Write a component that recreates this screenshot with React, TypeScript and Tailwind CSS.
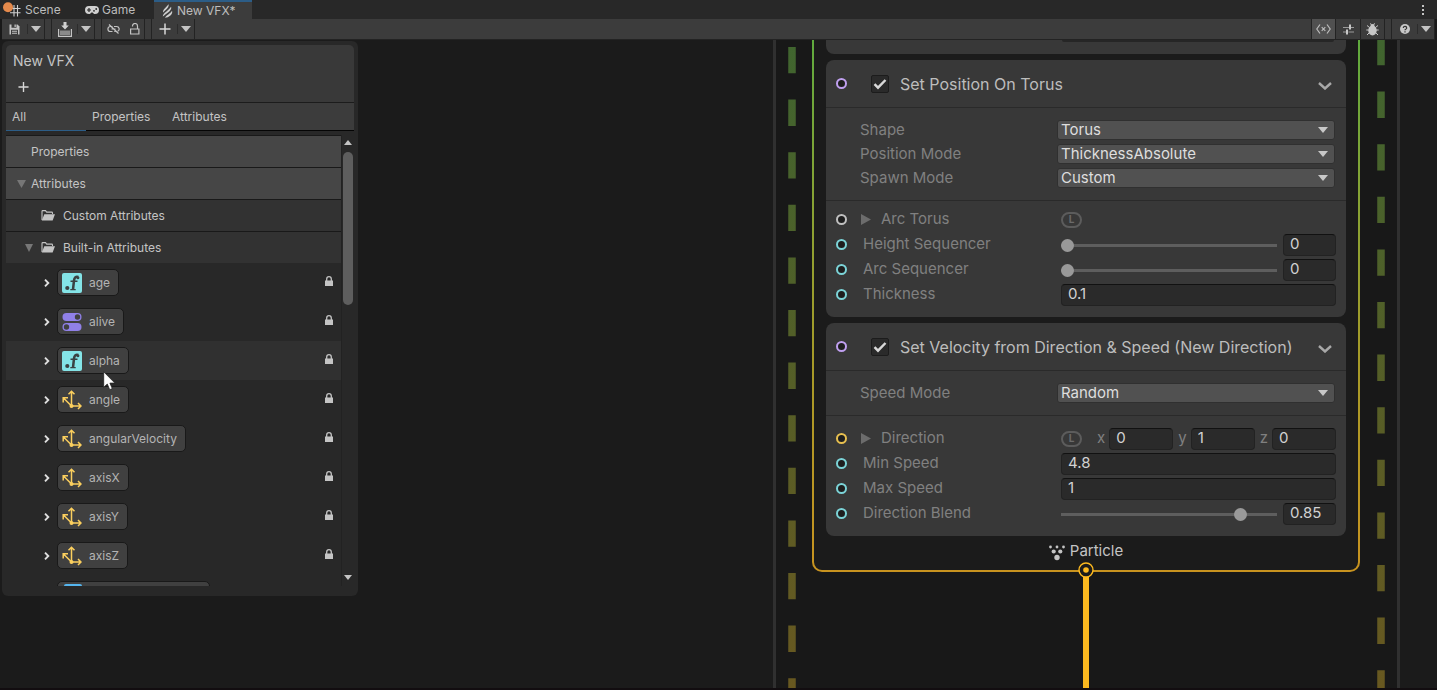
import React from "react";

const caret = "h-[6px] w-[10px] fill-[#c4c4c4]";

function Caret({ className = caret }: { className?: string }) {
  return (
    <svg viewBox="0 0 10 6" className={className} preserveAspectRatio="none" aria-hidden="true">
      <path d="M0 0h10L5 6z" />
    </svg>
  );
}

function Scene() {
  return (
    <svg viewBox="0 0 20 16" className="h-4 w-5" aria-hidden="true">
      <path d="M12 3v11.500M15.500 3v11.500M8 6.500h10.500M8 10.700h10.500" stroke="#cfcfcf" strokeWidth="1.100" />
      <circle cx="6" cy="5.200" r="5" fill="#e58a4c" />
    </svg>
  );
}

function Gamepad() {
  return (
    <svg viewBox="0 0 14 8" className="h-2 w-[14px]" aria-hidden="true">
      <path d="M4 0h6a4 4 0 0 1 0 8c-1.200 0-1.800-.8-2.400-1.600H6.400C5.800 7.200 5.200 8 4 8a4 4 0 0 1 0-8z" fill="#d0d0d0" />
      <path d="M2 4h4M4 2v4" stroke="#282828" strokeWidth="1.200" />
      <circle cx="9" cy="4.800" r=".9" fill="#282828" />
      <circle cx="11.200" cy="3" r=".9" fill="#282828" />
    </svg>
  );
}

function Vfx() {
  return (
    <svg viewBox="0 0 11 14" className="h-[14px] w-[11px]" aria-hidden="true">
      <path d="M1 8.500C.8 5 4.500 3.500 6.500.3 7.500 3 4.500 5.500 1 8.500zM.8 12.500C.8 9 7 6.500 9 2.800 10.500 6 5 9 .8 12.500zM3 13.800C4 11.500 8.500 9.500 10 6.800 11.200 10 7.500 13.500 3 13.800z" fill="#cfcfcf" />
    </svg>
  );
}

function Save() {
  return (
    <svg viewBox="0 0 11 11" className="h-[11px] w-[11px]" aria-hidden="true">
      <path d="M.5.5H8.500l2 2v8H.5z" fill="#c4c4c4" />
      <path d="M2.500 0h5v3.800h-5zM2 5.800h7V11H2z" fill="#3c3c3c" />
      <path d="M5.500.5h1.300v2.600H5.500zM3 6.800h5v1H3zM3 8.800h5v1H3z" fill="#c4c4c4" />
    </svg>
  );
}

function Import() {
  return (
    <svg viewBox="0 0 14 15" className="h-[15px] w-[14px]" aria-hidden="true">
      <path d="M2 8.500h10V13H2z" fill="#8a8a8a" />
      <path d="M.6 7v7.300h12.800V7" fill="none" stroke="#c4c4c4" strokeWidth="1.200" />
      <path d="M5.500 0h3v3.500h2.300L7 7.500 3.200 3.500h2.300z" fill="#d0d0d0" />
    </svg>
  );
}

function Unlink() {
  return (
    <svg viewBox="0 0 13 10" className="h-[10px] w-[13px]" fill="none" stroke="#c4c4c4" strokeWidth="1.200" aria-hidden="true">
      <path d="M5.500 2.500H3.400a2.500 2.500 0 0 0 0 5H5.500M7 2.500h2.600a2.500 2.500 0 0 1 1 4.800M7.300 7.500h1.200M4.500 5h4M2 .5l9.500 9" />
    </svg>
  );
}

function Unlocked() {
  return (
    <svg viewBox="0 0 10 12" className="h-3 w-[10px]" fill="none" stroke="#c4c4c4" strokeWidth="1.200" aria-hidden="true">
      <path d="M.6 6h8.300v5H.6zM2.500 3.500V3a2.500 2.500 0 0 1 5 0v3" />
    </svg>
  );
}

function Plus() {
  return (
    <svg viewBox="0 0 12 12" className="h-3 w-3" stroke="#d8d8d8" strokeWidth="1.500" aria-hidden="true">
      <path d="M6 .5v11M.5 6h11" />
    </svg>
  );
}

function Code() {
  return (
    <svg viewBox="0 0 15 10" className="h-[10px] w-[15px] shrink-0" fill="none" stroke="#bcbcbc" strokeWidth="1.200" aria-hidden="true">
      <path d="M4 .5.800 5 4 9.500M11 .5 14.200 5 11 9.500M5.700 3.200l3.600 3.600M9.300 3.200 5.700 6.800" />
    </svg>
  );
}

function Sliders() {
  return (
    <svg viewBox="0 0 11 11" className="h-[11px] w-[11px]" aria-hidden="true">
      <path d="M0 3.500h6M8 3.500h3M0 8h3M5.500 8H11" stroke="#9a9a9a" strokeWidth="1.200" />
      <path d="M7 .5v5M4 5.500v5" stroke="#d8d8d8" strokeWidth="1.800" />
    </svg>
  );
}

function Bug() {
  return (
    <svg viewBox="0 0 13 13" className="h-[13px] w-[13px]" aria-hidden="true">
      <path d="M1 2.500 3.500 4.500M12 2.500 9.500 4.500M.3 7h12.400M1 12l2.500-2.500M12 12 9.500 9.500M4.500.3l1 2M8.500.3l-1 2" stroke="#c8c8c8" />
      <ellipse cx="6.500" cy="7.500" rx="4.200" ry="5" fill="#c8c8c8" />
      <circle cx="6.500" cy="3" r="2" fill="#c8c8c8" />
    </svg>
  );
}

function Help() {
  return (
    <svg viewBox="0 0 10 10" className="h-[10px] w-[10px]" aria-hidden="true">
      <circle cx="5" cy="5" r="5" fill="#c8c8c8" />
      <path d="M3.300 4a1.700 1.500 0 1 1 2.400 1.300C5.200 5.500 5 5.800 5 6.300M5 7.200v1.200" stroke="#333" strokeWidth="1.200" fill="none" />
    </svg>
  );
}

function Folder() {
  return (
    <svg viewBox="0 0 14 11" className="h-[11px] w-[14px]" aria-hidden="true">
      <path d="M1 10V1.500Q1 .6 1.800.6h2.700l1.200 1.500h5q.8 0 .8.8V4" fill="none" stroke="#c4c4c4" strokeWidth="1.100" />
      <path d="M3.300 4.200H14L11.600 10.600H.8z" fill="#c4c4c4" />
    </svg>
  );
}

function FloatIcon() {
  return (
    <svg viewBox="0 0 20 20" className="h-5 w-5 shrink-0" aria-hidden="true">
      <rect width="20" height="20" rx="2" fill="#84e4e7" />
      <circle cx="5.300" cy="15" r="2.100" fill="#3a4243" />
      <path d="M11 16.500 12 7.500C12.300 4.300 14 3.200 16.300 4" fill="none" stroke="#3a4243" strokeWidth="2.500" />
      <path d="M8.500 8.200h7M8.300 16.600h5.400" stroke="#3a4243" strokeWidth="1.400" />
      <circle cx="15.900" cy="4.700" r="1.500" fill="#3a4243" />
    </svg>
  );
}

function BoolIcon() {
  return (
    <svg viewBox="0 0 20 20" className="h-5 w-5 shrink-0" aria-hidden="true">
      <rect x=".5" y="1" width="19" height="8" rx="4" fill="#9080e8" />
      <rect x=".5" y="11" width="19" height="8" rx="4" fill="#9080e8" />
      <circle cx="15.500" cy="5" r="2.700" fill="#404040" />
      <circle cx="4.500" cy="15" r="2.700" fill="#404040" />
    </svg>
  );
}

function VectorIcon() {
  return (
    <svg viewBox="0 0 20 20" className="h-5 w-5 shrink-0" fill="none" stroke="#fbcf5e" strokeWidth="1.500" aria-hidden="true">
      <path d="M9.500 16V2M6.500 4.300 9.500 1.300l3 3M9.500 16H19M16 13l3 3-3 3M9.500 16 1.500 8M1.200 12.500V7.700H6" />
      <circle cx="9.500" cy="16" r="2" fill="#fbcf5e" stroke="none" />
    </svg>
  );
}

function Lock() {
  return (
    <svg viewBox="0 0 8 10" className="h-[10px] w-2" aria-hidden="true">
      <path d="M0 4.500h8V10H0z" fill="#c4c4c4" />
      <path d="M1.700 5V3a2.300 2.300 0 0 1 4.600 0v2" fill="none" stroke="#c4c4c4" strokeWidth="1.300" />
    </svg>
  );
}

function Tool({ label, children, className }: { label: string; children: React.ReactNode; className: string }) {
  return (
    <button aria-label={label} className={"flex items-center justify-center " + className}>
      {children}
    </button>
  );
}

function SplitTool({ label, children }: { label: string; children: React.ReactNode }) {
  return (
    <div className="flex items-center border-r border-[#232323]">
      <Tool label={label} className="h-5 w-[25px]">{children}</Tool>
      <span className="h-[10px] w-px bg-[#2c2c2c]" />
      <Tool label={label + " options"} className="h-5 w-4 pb-px"><Caret /></Tool>
    </div>
  );
}

function TopBar() {
  return (
    <header>
      <nav className="flex h-[19px] items-stretch bg-[#282828] text-[12px] text-[#bdbdbd]">
        <button className="flex w-[76px] items-center gap-[3px] pl-[2px]"><Scene />Scene</button>
        <button className="flex w-[78px] items-center gap-[3px] pl-[9px]"><Gamepad />Game</button>
        <button className="flex w-[98px] items-center gap-1 border-t-2 border-[#2c5d87] bg-[#3c3c3c] pl-2"><Vfx />New VFX*</button>
        <button aria-label="Window menu" className="mr-2 ml-auto flex w-3 flex-col items-center justify-center gap-[2px]">
          <span className="h-[2px] w-[2px] bg-[#c4c4c4]" />
          <span className="h-[2px] w-[2px] bg-[#c4c4c4]" />
          <span className="h-[2px] w-[2px] bg-[#c4c4c4]" />
        </button>
      </nav>
      <div className="mx-[2px] flex h-[21px] items-stretch border-b border-[#232323] bg-[#3c3c3c]">
        <SplitTool label="Save"><Save /></SplitTool>
        <div className="ml-[6px] flex border-l border-[#232323]"><SplitTool label="Compile"><Import /></SplitTool></div>
        <div className="ml-[6px] flex border-x border-[#232323]">
          <Tool label="Auto attach" className="w-[23px]"><Unlink /></Tool>
          <Tool label="Lock" className="w-[19px]"><Unlocked /></Tool>
        </div>
        <div className="ml-[6px] flex border-l border-[#232323]"><SplitTool label="Add"><Plus /></SplitTool></div>
        <div className="ml-auto flex">
          <Tool label="Blackboard" className="w-6 border-l border-[#232323] bg-[#505050]"><Code /></Tool>
          <Tool label="Control" className="w-[25px] border-l border-[#232323]"><Sliders /></Tool>
          <Tool label="Debug" className="w-[25px] border-x border-[#232323]"><Bug /></Tool>
        </div>
        <div className="ml-[6px] flex border-l border-[#232323]"><SplitTool label="Help"><Help /></SplitTool></div>
      </div>
    </header>
  );
}

type Kind = "float" | "bool" | "vector";
const attributes: { name: string; kind: Kind }[] = [
  { name: "age", kind: "float" },
  { name: "alive", kind: "bool" },
  { name: "alpha", kind: "float" },
  { name: "angle", kind: "vector" },
  { name: "angularVelocity", kind: "vector" },
  { name: "axisX", kind: "vector" },
  { name: "axisY", kind: "vector" },
  { name: "axisZ", kind: "vector" },
];

function AttributeRow({ name, kind, hovered }: { name: string; kind: Kind; hovered: boolean }) {
  return (
    <li className={"flex h-[39px] items-center pr-2 pl-[35px] " + (hovered ? "bg-[#303030]" : "")}>
      <button aria-label={"Expand " + name} className="flex h-4 w-4 items-center">
        <svg viewBox="0 0 6 8" className="ml-[3px] h-2 w-[6px]" fill="none" stroke="#e0e0e0" strokeWidth="1.900" aria-hidden="true">
          <path d="M1 .7 4.300 4 1 7.300" />
        </svg>
      </button>
      <button className="flex h-[27px] items-center gap-[7px] rounded-[5px] border border-[#191919] bg-[#404040] pr-2 pl-1 text-[#b4b4b4]">
        {kind === "float" ? <FloatIcon /> : kind === "bool" ? <BoolIcon /> : <VectorIcon />}
        {name}
      </button>
      <span className="ml-auto pb-[3px]"><Lock /></span>
    </li>
  );
}

function Blackboard() {
  return (
    <aside className="absolute top-px left-[2px] flex h-[555px] w-[356px] flex-col rounded-md bg-[#282828] px-1 pt-1 pb-[10px] text-[12px] text-[#c4c4c4]">
      <div className="h-[57px] rounded-t-[5px] bg-[#393939] px-[7px] pt-[6px]">
        <h1 className="text-[14px] leading-5">New VFX</h1>
        <button aria-label="Add property" className="mt-[10px] ml-[5px] flex h-[11px] w-[11px]"><Plus /></button>
      </div>
      <div role="tablist" className="flex h-[29px] border-t border-b border-t-[#1c1c1c] border-b-[#050505] bg-[#3c3c3c]">
        <button role="tab" className="-mb-px w-20 border-b border-[#2c5d87] pl-[6px] text-left">All</button>
        <button role="tab" className="w-20 pl-[6px] text-left">Properties</button>
        <button role="tab" className="w-20 pl-[6px] text-left">Attributes</button>
      </div>
      <div className="mt-1 flex min-h-0 flex-1">
        <div className="min-w-0 flex-1 overflow-hidden border-t border-[#191919]">
          <div className="flex h-8 items-center border-b border-[#191919] bg-[#464646] pl-[25px]">Properties</div>
          <button className="flex h-8 w-full items-center gap-[5px] border-b border-[#191919] bg-[#464646] pl-[11px]">
            <Caret className="h-2 w-[9px] fill-[#777]" />Attributes
          </button>
          <div className="flex h-8 items-center gap-2 border-b border-[#191919] bg-[#323232] pl-[35px]"><Folder />Custom Attributes</div>
          <button className="flex h-[31px] w-full items-center gap-2 bg-[#323232] pl-[19px]">
            <Caret className="h-2 w-2 fill-[#777]" /><Folder />Built-in Attributes
          </button>
          <ul>
            {attributes.map((a) => <AttributeRow key={a.name} name={a.name} kind={a.kind} hovered={a.name === "alpha"} />)}
            <li className="pt-[6px] pl-[51px]">
              <div className="h-[27px] w-[153px] rounded-[5px] border border-[#191919] bg-[#404040] pt-[2px] pl-[6px]">
                <div className="h-5 w-[18px] rounded-[2px] bg-[#55b5ee]" />
              </div>
            </li>
          </ul>
        </div>
        <div className="flex w-[13px] flex-col items-center border-l border-[#222] pt-[5px] pb-[6px]">
          <Caret className="h-[5px] w-2 rotate-180 fill-[#c4c4c4]" />
          <div className="mt-[7px] h-[153px] w-[10px] rounded-full bg-[#5e5e5e]" />
          <Caret className="mt-auto h-[5px] w-2 fill-[#c4c4c4]" />
        </div>
      </div>
    </aside>
  );
}

function Port({ className }: { className: string }) {
  return <span className={"h-[11px] w-[11px] shrink-0 rounded-full border-2 bg-[#1e1e1e] " + className} />;
}

function Block({ title, id, children }: { title: string; id: string; children: React.ReactNode }) {
  return (
    <section className="rounded-lg bg-[#383838] pb-[10px]">
      <div className="flex h-12 items-center border-b border-[#2a2a2a] pr-[14px] pl-[10px]">
        <Port className="border-[#c0a0f0]" />
        <span className="relative ml-6 flex h-[18px] w-[18px]">
          <input id={id} type="checkbox" defaultChecked className="peer h-[18px] w-[18px] appearance-none rounded-[2px] border border-[#1c1c1c] bg-[#2a2a2a]" />
          <svg viewBox="0 0 18 18" className="pointer-events-none absolute inset-0 hidden peer-checked:block" fill="none" stroke="#d8d8d8" strokeWidth="2.400" aria-hidden="true">
            <path d="M3.500 9.200 7 12.700 14.500 5" />
          </svg>
        </span>
        <label htmlFor={id} className="ml-[11px] text-[16px] text-[#bdbdbd]">{title}</label>
        <button aria-label={"Collapse " + title} className="mt-1 ml-auto">
          <svg viewBox="0 0 14 8" className="h-2 w-[14px]" fill="none" stroke="#a8a8a8" strokeWidth="2.400" aria-hidden="true">
            <path d="M1 1l6 5.500L13 1" />
          </svg>
        </button>
      </div>
      {children}
    </section>
  );
}

function Setting({ label, value }: { label: string; value: string }) {
  return (
    <label className="flex h-6 items-center pr-[11px] pl-[34px]">
      <span className="w-[197px]">{label}</span>
      <span className="relative flex flex-1">
        <select defaultValue={value} className="h-5 w-full appearance-none rounded-[3px] border border-[#303030] bg-[#515151] pl-[3px] text-[15px] leading-4 text-[#dedede]">
          <option>{value}</option>
        </select>
        <Caret className="pointer-events-none absolute top-[7px] right-[7px] h-[6px] w-[10px] fill-[#c8c8c8]" />
      </span>
    </label>
  );
}

const field = "h-[22px] min-w-0 rounded-[4px] border border-[#222] border-t-[#111] bg-[#2a2a2a] px-[6px] text-[15px] text-[#d2d2d2]";

function InputRow({ label, port, nested, children }: { label: string; port: string; nested?: boolean; children: React.ReactNode }) {
  return (
    <div className="flex h-[25px] items-center pr-[10px] pl-[10px]">
      <Port className={port} />
      <span className="ml-4 flex w-[198px] items-center">
        {nested && (
          <svg viewBox="0 0 10 11" className="-ml-[2px] mr-[10px] h-[11px] w-[10px] fill-[#6c6c6c]" aria-hidden="true"><path d="M0 0l10 5.500L0 11z" /></svg>
        )}
        {label}
      </span>
      <div className="flex min-w-0 flex-1 items-center">{children}</div>
    </div>
  );
}

function Space() {
  return <button aria-label="Local space" className="flex h-4 w-[21px] items-center justify-center rounded-full border-2 border-[#5c5c5c] text-[10px] font-bold text-[#6a6a6a]">L</button>;
}

function SliderField({ label, value }: { label: string; value: string }) {
  return (
    <>
      <input
        type="range" min="0" max="1" step="0.01" defaultValue={value} aria-label={label}
        className="mt-[2px] mr-[6px] h-[14px] min-w-0 flex-1 appearance-none bg-transparent [&::-webkit-slider-runnable-track]:h-[3px] [&::-webkit-slider-runnable-track]:bg-[#5e5e5e] [&::-webkit-slider-thumb]:-mt-[5px] [&::-webkit-slider-thumb]:h-[13px] [&::-webkit-slider-thumb]:w-[13px] [&::-webkit-slider-thumb]:appearance-none [&::-webkit-slider-thumb]:rounded-full [&::-webkit-slider-thumb]:bg-[#999]"
      />
      <input aria-label={label + " value"} defaultValue={value} className={field + " w-[53px]"} />
    </>
  );
}

function Axis({ name, value }: { name: string; value: string }) {
  return (
    <label className="flex items-center gap-1">
      {name}
      <input defaultValue={value} className={field + " w-16"} />
    </label>
  );
}

const cyan = "border-[#7cd4d8]";

function Context() {
  return (
    <div className="rounded-b-[10px] bg-linear-to-b from-[#5faa3e] via-[#a59a28] via-60% to-[#c8931f] px-[2px] pb-[2px]">
      <div className="flex flex-col gap-[6px] rounded-b-lg bg-[#1b1b1b] px-3 text-[15px] text-[#808080]">
        <div className="h-[14px] rounded-b-lg bg-[#383838] pr-3 pl-[236px]"><div className="h-[2px] rounded-b-sm bg-[#262626]" /></div>
        <Block id="set-position" title="Set Position On Torus">
          <div className="border-b border-[#2a2a2a] py-[10px]">
            <Setting label="Shape" value="Torus" />
            <Setting label="Position Mode" value="ThicknessAbsolute" />
            <Setting label="Spawn Mode" value="Custom" />
          </div>
          <div className="pt-[6px]">
            <InputRow label="Arc Torus" port="border-[#c0c0c0]" nested><Space /></InputRow>
            <InputRow label="Height Sequencer" port={cyan}><SliderField label="Height Sequencer" value="0" /></InputRow>
            <InputRow label="Arc Sequencer" port={cyan}><SliderField label="Arc Sequencer" value="0" /></InputRow>
            <InputRow label="Thickness" port={cyan}><input aria-label="Thickness" defaultValue="0.1" className={field + " w-full"} /></InputRow>
          </div>
        </Block>
        <Block id="set-velocity" title="Set Velocity from Direction &amp; Speed (New Direction)">
          <div className="border-b border-[#2a2a2a] py-[10px]">
            <Setting label="Speed Mode" value="Random" />
          </div>
          <div className="pt-[10px]">
            <InputRow label="Direction" port="border-[#e8c050]" nested>
              <Space />
              <div className="ml-auto flex gap-[5px]">
                <Axis name="x" value="0" />
                <Axis name="y" value="1" />
                <Axis name="z" value="0" />
              </div>
            </InputRow>
            <InputRow label="Min Speed" port={cyan}><input aria-label="Min Speed" defaultValue="4.8" className={field + " w-full"} /></InputRow>
            <InputRow label="Max Speed" port={cyan}><input aria-label="Max Speed" defaultValue="1" className={field + " w-full"} /></InputRow>
            <InputRow label="Direction Blend" port={cyan}><SliderField label="Direction Blend" value="0.85" /></InputRow>
          </div>
        </Block>
        <div className="-mt-[6px] flex h-[34px] items-center justify-center gap-[5px] pb-1 text-[#c4c4c4]">
          <svg viewBox="0 0 16 16" className="mt-1 h-4 w-4 fill-[#c4c4c4]" aria-hidden="true">
            <circle cx="1.500" cy="2" r="1.400" /><circle cx="8" cy="2" r="1.400" /><circle cx="14.500" cy="2" r="1.400" />
            <circle cx="4.700" cy="6.500" r="2.100" /><circle cx="11.300" cy="6.500" r="2.100" /><circle cx="8" cy="12.500" r="2.700" />
          </svg>
          Particle
        </div>
      </div>
    </div>
  );
}

function Dashes({ offset, className }: { offset: number; className: string }) {
  const id = "dash" + offset;
  return (
    <svg className={"absolute top-0 h-full w-2 " + className} aria-hidden="true">
      <defs>
        <linearGradient id={id} gradientUnits="userSpaceOnUse" x1="0" y1="0" x2="0" y2="648">
          <stop offset="0" stopColor="#40652f" />
          <stop offset="1" stopColor="#685820" />
        </linearGradient>
      </defs>
      <line x1="4" x2="4" y1={offset} y2="1200" stroke={"url(#" + id + ")"} strokeWidth="7.500" strokeDasharray="26.300 26.300" />
    </svg>
  );
}

function Graph() {
  return (
    <div className="absolute inset-y-0 left-[773px] w-[627px] border-x-[3px] border-[#303030] bg-[#181818]">
      <Dashes offset={7} className="left-3" />
      <Dashes offset={-1} className="right-3" />
      <div className="mr-[37px] ml-9 flex h-full flex-col">
        <Context />
        <div className="mt-[-10px] flex min-h-0 flex-1 flex-col items-center">
          <svg viewBox="0 0 16 16" className="h-4 w-4 shrink-0" aria-hidden="true">
            <circle cx="8" cy="8" r="7" fill="#1b1b1b" stroke="#fcb91f" strokeWidth="1.400" />
            <circle cx="8" cy="8" r="2.800" fill="#fcb91f" />
          </svg>
          <div className="-mt-px w-[6px] flex-1 bg-[#fcb91f]" />
        </div>
      </div>
    </div>
  );
}

export default function App() {
  return (
    <div className="flex h-screen flex-col overflow-hidden bg-[#191919] font-['Inter',sans-serif]">
      <TopBar />
      <main className="relative min-h-0 flex-1 overflow-hidden border-b-2 border-[#120d10] bg-[#1b1b1b]">
        <Graph />
        <Blackboard />
        <svg viewBox="0 0 13 20" className="pointer-events-none absolute top-[331px] left-[103px] h-5 w-[13px]" aria-hidden="true">
          <path d="M.7.800v15.500l3.600-3.200 2.400 5.600 2.600-1.100-2.400-5.500h5z" fill="#fff" stroke="#222" strokeWidth=".8" />
        </svg>
      </main>
    </div>
  );
}
